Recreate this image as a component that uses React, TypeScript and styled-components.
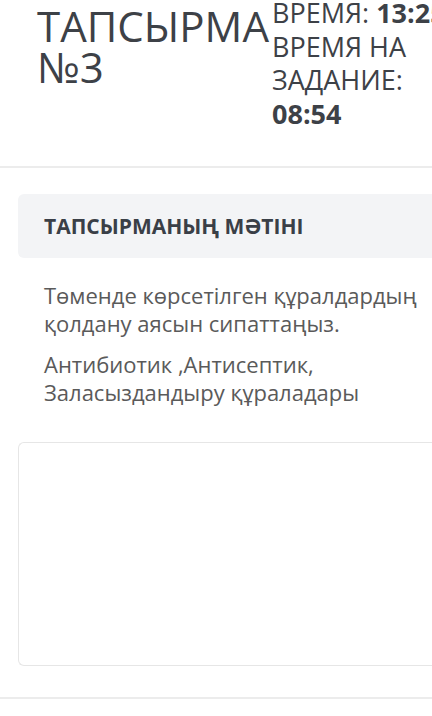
import styled, { createGlobalStyle } from 'styled-components';

const GlobalStyle = createGlobalStyle`
  html, body {
    margin: 0;
    padding: 0;
    background: #fff;
    overflow: hidden;
  }
  body {
    font-family: 'Open Sans', 'Noto Sans', sans-serif;
  }
`;

const Page = styled.div`
  width: 470px;
  background: #fff;
`;

const Header = styled.div`
  display: flex;
  align-items: flex-start;
  padding: 0 0 36px 37px;
  border-bottom: 2px solid #ececec;
`;

const Title = styled.h1`
  margin: 5px 0 0 0;
  font-size: 42px;
  line-height: 41px;
  font-weight: 400;
  color: #3d4147;
  width: 235px;
  flex-shrink: 0;
`;

const Timer = styled.div`
  margin-top: -4px;
  width: 170px;
  flex-shrink: 0;
  font-size: 27px;
  line-height: 33.6px;
  color: #3d4147;

  b {
    font-weight: 700;
  }
`;

const TimerLine = styled.div<{ $nowrap?: boolean }>`
  white-space: ${(p) => (p.$nowrap ? 'nowrap' : 'normal')};
`;

const Section = styled.div`
  padding: 26px 0 31px 18px;
  border-bottom: 2px solid #ececec;
`;

const CardHeader = styled.div`
  display: flex;
  align-items: center;
  height: 64px;
  padding-left: 26px;
  background: #f3f4f6;
  border-radius: 6px 0 0 6px;
  font-size: 21px;
  font-weight: 700;
  color: #3a3f47;
`;

const Body = styled.div`
  padding: 24px 0 0 26px;
`;

const Paragraph = styled.p`
  margin: 0 0 14px 0;
  font-size: 22px;
  line-height: 27.5px;
  color: #5a5a5a;

  &:last-child {
    margin-bottom: 0;
  }
`;

const Answer = styled.div`
  margin-top: 36px;
  height: 222px;
  border: 1.5px solid #e6e6e6;
  border-right: none;
  border-radius: 6px 0 0 6px;
  background: #fff;
`;

export default function App() {
  return (
    <Page>
      <GlobalStyle />
      <Header>
        <Title>ТАПСЫРМА №3</Title>
        <Timer>
          <TimerLine $nowrap>
            ВРЕМЯ: <b>13:25</b>
          </TimerLine>
          <TimerLine>
            ВРЕМЯ НА ЗАДАНИЕ: <b>08:54</b>
          </TimerLine>
        </Timer>
      </Header>
      <Section>
        <CardHeader>ТАПСЫРМАНЫҢ МӘТІНІ</CardHeader>
        <Body>
          <Paragraph>Төменде көрсетілген құралдардың қолдану аясын сипаттаңыз.</Paragraph>
          <Paragraph>Антибиотик ,Антисептик, Заласыздандыру құраладары</Paragraph>
        </Body>
        <Answer />
      </Section>
    </Page>
  );
}
